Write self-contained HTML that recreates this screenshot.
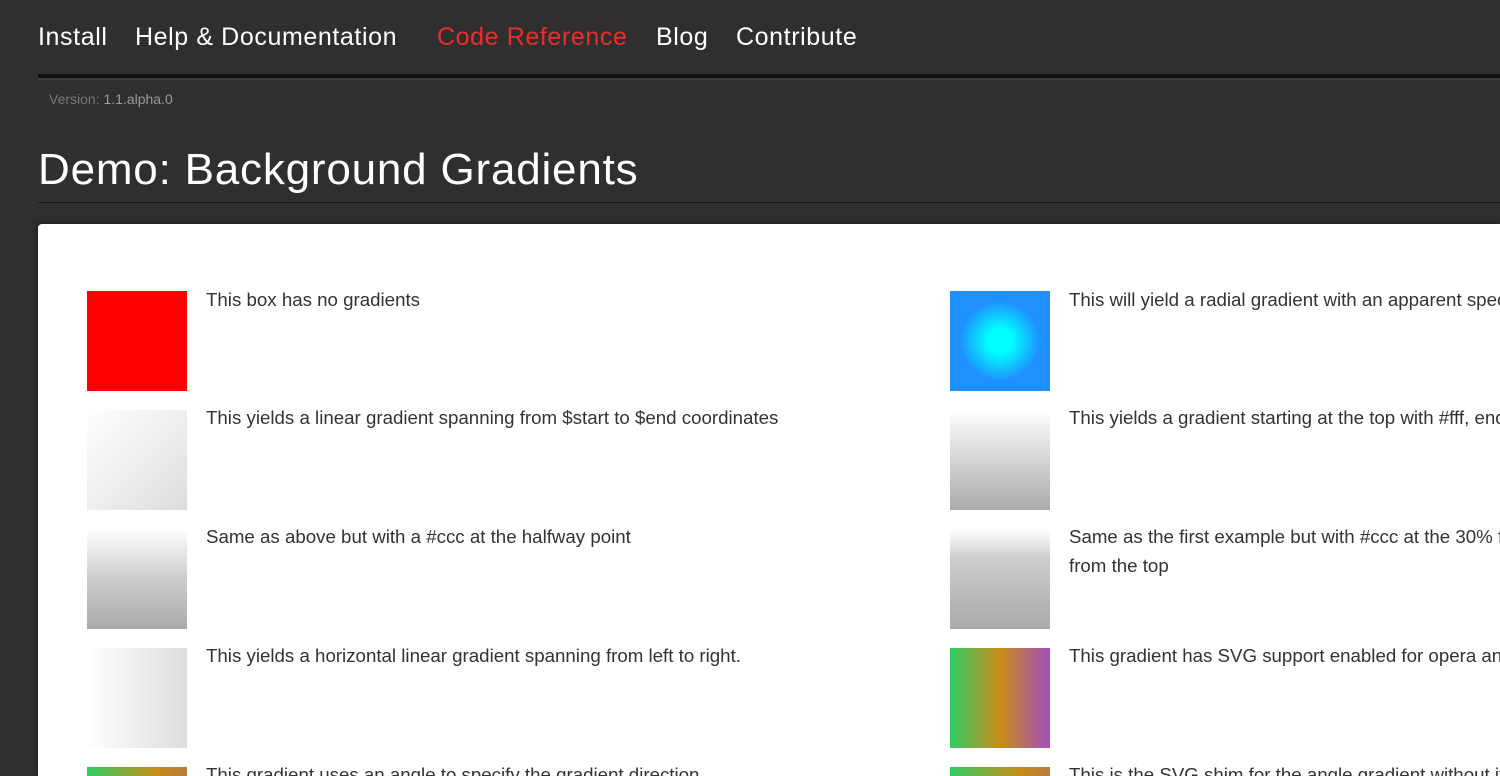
<!DOCTYPE html>
<html><head><style>
html,body{margin:0;padding:0;width:1500px;height:776px;overflow:hidden;background:#2f2f2f;font-family:"Liberation Sans",sans-serif;}
#wrap{position:relative;width:1500px;height:776px;overflow:hidden;}
.nav a{position:absolute;top:20px;font-size:25px;color:#fff;text-decoration:none;white-space:nowrap;line-height:34px;letter-spacing:0.6px;}
.bar{position:absolute;left:38px;top:74px;width:1462px;height:4px;background:#111;}
.bar2{position:absolute;left:38px;top:78px;width:1462px;height:2px;background:#3d3d3d;}
.ver{position:absolute;left:49px;top:91px;font-size:14px;color:#777;}
.ver span{color:#9a9a9a}
h1{position:absolute;left:38px;top:143px;margin:0;font-weight:normal;font-size:44px;color:#fff;line-height:54px;white-space:nowrap;letter-spacing:0.8px;}
.line{position:absolute;left:38px;top:202px;width:1462px;height:1px;background:#1a1a1a;}
.panel{position:absolute;left:38px;top:224px;width:1462px;height:552px;background:#fff;border-radius:4px 0 0 0;box-shadow:0 0 6px rgba(0,0,0,.5);}
.box{position:absolute;width:100px;height:100px;}
.t{position:absolute;font-size:18.7px;color:#333;line-height:29px;white-space:nowrap;overflow:hidden;}
.r{width:431px;}
.b{height:9px;}
</style></head><body><div id="wrap">
<div class="nav">
<a style="left:38px">Install</a>
<a style="left:135px">Help &amp; Documentation</a>
<a style="left:437px;color:#ee2b2b">Code Reference</a>
<a style="left:656px">Blog</a>
<a style="left:736px">Contribute</a>
</div>
<div class="bar"></div><div class="bar2"></div>
<div class="ver">Version: <span>1.1.alpha.0</span></div>
<h1>Demo: Background Gradients</h1>
<div class="line"></div>
<div class="panel"></div>

<div class="box" style="left:87px;top:291px;background:#f00"></div>
<div class="t" style="left:206px;top:285px">This box has no gradients</div>
<div class="box" style="left:950px;top:291px;background:radial-gradient(circle at 50% 50%,#0ff 0,#0ff 12px,#1e90ff 40px)"></div>
<div class="t r" style="left:1069px;top:285px">This will yield a radial gradient with an apparent specular highlight</div>

<div class="box" style="left:87px;top:410px;background:linear-gradient(135deg,#fff,#ddd)"></div>
<div class="t" style="left:206px;top:403px">This yields a linear gradient spanning from $start to $end coordinates</div>
<div class="box" style="left:950px;top:410px;background:linear-gradient(#fff,#aaa)"></div>
<div class="t r" style="left:1069px;top:403px">This yields a gradient starting at the top with #fff, ending in #aaa</div>

<div class="box" style="left:87px;top:529px;background:linear-gradient(#fff,#ccc 50%,#aaa)"></div>
<div class="t" style="left:206px;top:522px">Same as above but with a #ccc at the halfway point</div>
<div class="box" style="left:950px;top:529px;background:linear-gradient(#fff,#ccc 30%,#aaa)"></div>
<div class="t r" style="left:1069px;top:522px">Same as the first example but with #ccc at the 30% from<br>from the top</div>

<div class="box" style="left:87px;top:648px;background:linear-gradient(90deg,#fff,#ddd)"></div>
<div class="t" style="left:206px;top:641px">This yields a horizontal linear gradient spanning from left to right.</div>
<div class="box" style="left:950px;top:648px;background:linear-gradient(90deg,#2ecc63,#c98b16 50%,#a14fc0)"></div>
<div class="t r" style="left:1069px;top:641px">This gradient has SVG support enabled for opera and IE9</div>

<div class="box b" style="left:87px;top:767px;background:linear-gradient(90deg,#2ecc63,#c98b16 70%,#b97a40)"></div>
<div class="t" style="left:206px;top:760px;height:16px">This gradient uses an angle to specify the gradient direction</div>
<div class="box b" style="left:950px;top:767px;background:linear-gradient(90deg,#2ecc63,#c98b16 70%,#b97a40)"></div>
<div class="t r" style="left:1069px;top:760px;height:16px">This is the SVG shim for the angle gradient without it</div>
</div></body></html>
